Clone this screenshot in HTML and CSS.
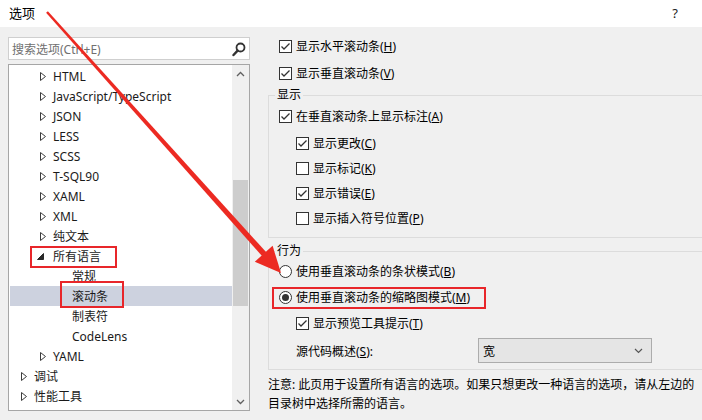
FILE: index.html
```html
<!DOCTYPE html>
<html lang="zh-CN">
<head>
    <meta charset="UTF-8">
    <meta name="viewport" content="width=device-width, initial-scale=1.0">
    <title>选项</title>
    <link rel="stylesheet" href="styles.css">
</head>
<body>
<div class="window">
    <!-- Title bar -->
    <div class="titlebar">
        <span class="title">选项</span>
        <span class="help">?</span>
    </div>

    <div class="content">
        <!-- Left: search + tree -->
        <div class="left">
            <div class="search">
                <span class="placeholder">搜索选项(Ctrl+E)</span>
                <svg class="search-icon" width="14" height="15" viewBox="0 0 14 15">
                    <circle cx="8.5" cy="5.5" r="4" fill="none" stroke="#333" stroke-width="1.8"/>
                    <line x1="5.6" y1="8.6" x2="1.5" y2="13" stroke="#333" stroke-width="2.4" stroke-linecap="round"/>
                </svg>
            </div>

            <div class="tree">
                <ul class="tree-list">
                    <li class="node lv2"><svg class="tw" width="6" height="9" viewBox="0 0 6 9"><polygon points="0.5,0.5 5.5,4.5 0.5,8.5"/></svg>HTML</li>
                    <li class="node lv2"><svg class="tw" width="6" height="9" viewBox="0 0 6 9"><polygon points="0.5,0.5 5.5,4.5 0.5,8.5"/></svg>JavaScript/TypeScript</li>
                    <li class="node lv2"><svg class="tw" width="6" height="9" viewBox="0 0 6 9"><polygon points="0.5,0.5 5.5,4.5 0.5,8.5"/></svg>JSON</li>
                    <li class="node lv2"><svg class="tw" width="6" height="9" viewBox="0 0 6 9"><polygon points="0.5,0.5 5.5,4.5 0.5,8.5"/></svg>LESS</li>
                    <li class="node lv2"><svg class="tw" width="6" height="9" viewBox="0 0 6 9"><polygon points="0.5,0.5 5.5,4.5 0.5,8.5"/></svg>SCSS</li>
                    <li class="node lv2"><svg class="tw" width="6" height="9" viewBox="0 0 6 9"><polygon points="0.5,0.5 5.5,4.5 0.5,8.5"/></svg>T-SQL90</li>
                    <li class="node lv2"><svg class="tw" width="6" height="9" viewBox="0 0 6 9"><polygon points="0.5,0.5 5.5,4.5 0.5,8.5"/></svg>XAML</li>
                    <li class="node lv2"><svg class="tw" width="6" height="9" viewBox="0 0 6 9"><polygon points="0.5,0.5 5.5,4.5 0.5,8.5"/></svg>XML</li>
                    <li class="node lv2"><svg class="tw" width="6" height="9" viewBox="0 0 6 9"><polygon points="0.5,0.5 5.5,4.5 0.5,8.5"/></svg>纯文本</li>
                    <li class="node lv2"><svg class="tw tw-open" width="7" height="7" viewBox="0 0 7 7"><polygon points="6.5,0.5 6.5,6.5 0.5,6.5"/></svg>所有语言</li>
                    <li class="node lv3">常规</li>
                    <li class="node lv3 selected">滚动条</li>
                    <li class="node lv3">制表符</li>
                    <li class="node lv3">CodeLens</li>
                    <li class="node lv2"><svg class="tw" width="6" height="9" viewBox="0 0 6 9"><polygon points="0.5,0.5 5.5,4.5 0.5,8.5"/></svg>YAML</li>
                    <li class="node lv1"><svg class="tw" width="6" height="9" viewBox="0 0 6 9"><polygon points="0.5,0.5 5.5,4.5 0.5,8.5"/></svg>调试</li>
                    <li class="node lv1"><svg class="tw" width="6" height="9" viewBox="0 0 6 9"><polygon points="0.5,0.5 5.5,4.5 0.5,8.5"/></svg>性能工具</li>
                </ul>
                <div class="vscroll">
                    <div class="sb-btn">
                        <svg width="9" height="6" viewBox="0 0 9 6"><polyline points="1,5 4.5,1.5 8,5" fill="none" stroke="#606060" stroke-width="1.3"/></svg>
                    </div>
                    <div class="sb-track"><div class="sb-thumb"></div></div>
                    <div class="sb-btn">
                        <svg width="9" height="6" viewBox="0 0 9 6"><polyline points="1,1 4.5,4.5 8,1" fill="none" stroke="#606060" stroke-width="1.3"/></svg>
                    </div>
                </div>
            </div>
        </div>

        <!-- Right: options -->
        <div class="right">
            <div class="opt top-opt">
                <span class="cb checked"><svg width="11" height="11" viewBox="0 0 11 11"><polyline points="1.5,5.5 4,8 9.5,2.5"/></svg></span>
                <span>显示水平滚动条(<u>H</u>)</span>
            </div>
            <div class="opt top-opt second">
                <span class="cb checked"><svg width="11" height="11" viewBox="0 0 11 11"><polyline points="1.5,5.5 4,8 9.5,2.5"/></svg></span>
                <span>显示垂直滚动条(<u>V</u>)</span>
            </div>

            <fieldset class="group group-display">
                <legend>显示</legend>
                <div class="opt">
                    <span class="cb checked"><svg width="11" height="11" viewBox="0 0 11 11"><polyline points="1.5,5.5 4,8 9.5,2.5"/></svg></span>
                    <span>在垂直滚动条上显示标注(<u>A</u>)</span>
                </div>
                <div class="opt sub first-sub">
                    <span class="cb checked"><svg width="11" height="11" viewBox="0 0 11 11"><polyline points="1.5,5.5 4,8 9.5,2.5"/></svg></span>
                    <span>显示更改(<u>C</u>)</span>
                </div>
                <div class="opt sub">
                    <span class="cb"></span>
                    <span>显示标记(<u>K</u>)</span>
                </div>
                <div class="opt sub">
                    <span class="cb checked"><svg width="11" height="11" viewBox="0 0 11 11"><polyline points="1.5,5.5 4,8 9.5,2.5"/></svg></span>
                    <span>显示错误(<u>E</u>)</span>
                </div>
                <div class="opt sub">
                    <span class="cb"></span>
                    <span>显示插入符号位置(<u>P</u>)</span>
                </div>
            </fieldset>

            <fieldset class="group group-behavior">
                <legend>行为</legend>
                <div class="opt">
                    <span class="radio"></span>
                    <span>使用垂直滚动条的条状模式(<u>B</u>)</span>
                </div>
                <div class="opt spaced">
                    <span class="radio on"></span>
                    <span>使用垂直滚动条的缩略图模式(<u>M</u>)</span>
                </div>
                <div class="opt sub spaced">
                    <span class="cb checked"><svg width="11" height="11" viewBox="0 0 11 11"><polyline points="1.5,5.5 4,8 9.5,2.5"/></svg></span>
                    <span>显示预览工具提示(<u>T</u>)</span>
                </div>
                <div class="opt sub source-row">
                    <span class="field-label">源代码概述(<u>S</u>):</span>
                    <div class="select">
                        <span>宽</span>
                        <svg width="9" height="6" viewBox="0 0 9 6"><polyline points="1,1 4.5,4.5 8,1" fill="none" stroke="#555" stroke-width="1.2"/></svg>
                    </div>
                </div>
            </fieldset>

            <p class="note">注意: 此页用于设置所有语言的选项。如果只想更改一种语言的选项，请从左边的<br>目录树中选择所需的语言。</p>
        </div>
    </div>

    <!-- Red annotations drawn over the dialog -->
    <svg class="annot-arrow" width="702" height="420" viewBox="0 0 702 420">
        <polygon points="46.1,12.8 47.9,11.2 266.3,252.3 262.1,256.1" fill="#ec2a22"/>
        <polygon points="254.8,261.7 281,273 272.6,245.7" fill="#ec2a22"/>
    </svg>
    <div class="annot-box box-lang"></div>
    <div class="annot-box box-scroll"></div>
    <div class="annot-box box-mode"></div>
</div>
</body>
</html>
```

FILE: styles.css
```css
/* Base */
html, body {
    margin: 0;
    padding: 0;
}

body {
    font-family: "Noto Sans", "Noto Sans CJK SC", sans-serif;
    font-size: 12px;
    color: #1a1a1a;
}

.window {
    position: relative;
    width: 702px;
    height: 420px;
    overflow: hidden;
    background: #f0f0f0;
}

/* Title bar */
.titlebar {
    height: 27px;
    background: #fff;
    display: flex;
    align-items: center;
    justify-content: space-between;
    padding: 0 24px 2px 9px;
    box-sizing: border-box;
}

.title {
    font-size: 13px;
    color: #000;
}

.help {
    font-size: 13px;
    color: #222;
}

.content {
    display: flex;
    height: 393px;
}

/* Left column */
.left {
    width: 242px;
    margin-left: 8px;
    padding-top: 10px;
    display: flex;
    flex-direction: column;
    gap: 4px;
}

.search {
    height: 23px;
    background: #fff;
    border: 1px solid #cfcfcf;
    box-sizing: border-box;
    display: flex;
    align-items: center;
    justify-content: space-between;
    padding: 0 3px 0 3px;
}

.placeholder {
    color: #707070;
}

.search-icon {
    margin-top: 1px;
}

.tree {
    height: 347px;
    background: #fff;
    border: 1px solid #a6a6a6;
    box-sizing: border-box;
    display: flex;
}

.tree-list {
    list-style: none;
    margin: 0;
    padding: 1px 0 0 1px;
    flex: 1;
    overflow: hidden;
}

.node {
    height: 20px;
    display: flex;
    align-items: center;
    white-space: nowrap;
}

.node.lv1 { padding-left: 11px; }
.node.lv2 { padding-left: 30px; }
.node.lv3 { padding-left: 62px; }

.node.selected {
    background: #cdd2df;
}

.tw {
    margin-right: 7px;
    flex-shrink: 0;
}

.tw polygon {
    fill: none;
    stroke: #3c3c3c;
    stroke-width: 1;
}

.tw.tw-open {
    margin-left: -3px;
    margin-right: 9px;
}

.tw.tw-open polygon {
    fill: #2a2a2a;
    stroke: #2a2a2a;
}

/* Tree scrollbar */
.vscroll {
    width: 17px;
    display: flex;
    flex-direction: column;
    background: #f0f0f0;
}

.sb-btn {
    height: 17px;
    display: flex;
    align-items: center;
    justify-content: center;
}

.sb-track {
    flex: 1;
}

.sb-thumb {
    margin: 98px 1px 0 1px;
    height: 126px;
    background: #cdcdcd;
}

/* Right column */
.right {
    flex: 1;
    margin-left: 18px;
    padding-top: 9px;
    color: #000;
}

.opt {
    height: 20px;
    display: flex;
    align-items: center;
    white-space: nowrap;
}

.top-opt {
    padding-left: 11px;
}

.top-opt.second {
    margin-top: 7px;
}

.opt.sub {
    margin-left: 17px;
    margin-top: 5px;
}

.opt.sub.first-sub {
    margin-top: 7px;
}

.opt.spaced {
    margin-top: 6px;
}

.cb {
    width: 13px;
    height: 13px;
    box-sizing: border-box;
    border: 1px solid #333;
    background: #fff;
    margin-right: 4px;
    display: flex;
    align-items: center;
    justify-content: center;
    flex-shrink: 0;
}

.cb svg polyline {
    fill: none;
    stroke: #333;
    stroke-width: 1.3;
}

.radio {
    width: 13px;
    height: 13px;
    box-sizing: border-box;
    border: 1px solid #333;
    border-radius: 50%;
    background: #fff;
    margin-right: 4px;
    display: flex;
    align-items: center;
    justify-content: center;
    flex-shrink: 0;
}

.radio.on::after {
    content: "";
    width: 7px;
    height: 7px;
    border-radius: 50%;
    background: #333;
}

/* Group boxes */
.group {
    margin: 4px -20px 0 0;
    padding: 3px 0 9px 10px;
    border: 1px solid #dcdcdc;
    min-inline-size: 0;
}

.group legend {
    padding: 0 2px;
    margin-left: -4px;
    line-height: 16px;
}

.group-behavior {
    margin-top: 5px;
    padding-top: 2px;
    padding-bottom: 6px;
}

.source-row {
    height: 25px;
    margin-top: 3px;
}

.field-label {
    width: 182px;
}

.select {
    width: 174px;
    height: 25px;
    box-sizing: border-box;
    background: #e5e5e5;
    border: 1px solid #acacac;
    display: flex;
    align-items: center;
    justify-content: space-between;
    padding: 0 8px 0 4px;
}

.note {
    margin: 5px 0 0 0;
    line-height: 19px;
    white-space: nowrap;
}

/* Red annotations over the dialog */
.annot-arrow {
    position: absolute;
    left: 0;
    top: 0;
    pointer-events: none;
}

.annot-box {
    position: absolute;
    border: 2px solid #e8262a;
    box-sizing: border-box;
    pointer-events: none;
}

.box-lang {
    left: 30px;
    top: 246px;
    width: 87px;
    height: 22px;
}

.box-scroll {
    left: 60px;
    top: 281px;
    width: 64px;
    height: 27px;
}

.box-mode {
    left: 272px;
    top: 287px;
    width: 214px;
    height: 22px;
}
```
